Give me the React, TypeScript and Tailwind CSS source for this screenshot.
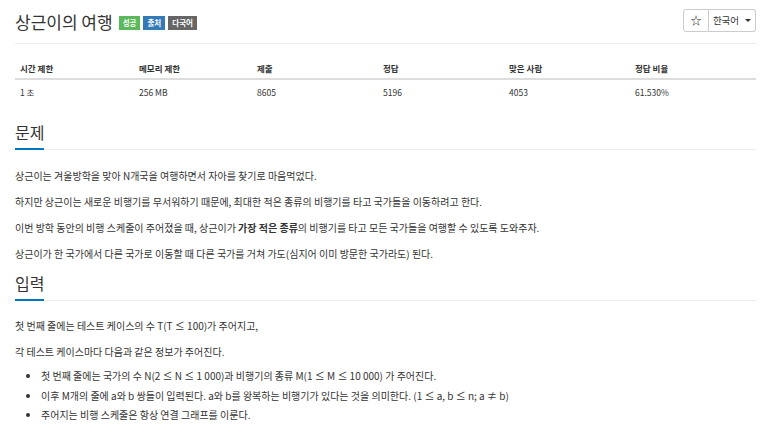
const stats = [
  { label: '시간 제한', value: '1 초', w: 'w-[119px]' },
  { label: '메모리 제한', value: '256 MB', w: 'w-[118px]' },
  { label: '제출', value: '8605', w: 'w-[126px]' },
  { label: '정답', value: '5196', w: 'w-[126px]' },
  { label: '맞은 사람', value: '4053', w: 'w-[126px]' },
  { label: '정답 비율', value: '61.530%', w: 'flex-1' },
];

const SectionTitle = ({ children }: { children: string }) => (
  <div className="border-b border-[#eeeeee] flex">
    <h2 className="text-[16px] leading-[22px] text-[#333] pb-[5px] border-b-2 border-[#0076c0] -mb-px">
      {children}
    </h2>
  </div>
);

export default function App() {
  return (
    <div
      className="bg-white min-h-[435px] pl-[15px] pr-[12px] text-[#333] overflow-hidden"
      style={{ fontFamily: '"Noto Sans CJK KR", "Open Sans", sans-serif' }}
    >
      {/* Header */}
      <div className="flex items-center justify-between h-[44px] border-b border-[#eeeeee]">
        <div className="flex items-center gap-[6px]">
          <h1 className="text-[17px] leading-none text-[#333]">상근이의 여행</h1>
          <div className="flex gap-[3px] mt-[3px]">
            <span className="bg-[#5cb85c] text-white text-[7.5px] font-bold px-[4px] h-[14px] leading-[14px]">성공</span>
            <span className="bg-[#337ab7] text-white text-[7.5px] font-bold px-[4px] h-[14px] leading-[14px]">출처</span>
            <span className="bg-[#666] text-white text-[7.5px] font-bold px-[4px] h-[14px] leading-[14px]">다국어</span>
          </div>
        </div>
        <div className="flex h-[23px] mb-[2px]">
          <button className="w-[26px] border border-[#ccc] rounded-l-[3px] flex items-center justify-center text-[11px] text-[#222]">
            ☆
          </button>
          <button className="w-[47px] border border-l-0 border-[#ccc] rounded-r-[3px] flex items-center justify-center gap-[6px] text-[9.5px] text-[#333]">
            한국어
            <span className="w-0 h-0 border-l-[3px] border-r-[3px] border-t-[3px] border-l-transparent border-r-transparent border-t-[#333]" />
          </button>
        </div>
      </div>

      {/* Stats table */}
      <div className="mt-[14px] text-[8.5px]">
        <div className="flex h-[22px] items-center border-b-2 border-[#dddddd] font-bold">
          {stats.map((s) => (
            <div key={s.label} className={`${s.w} px-[5px]`}>{s.label}</div>
          ))}
        </div>
        <div className="flex h-[24px] items-center">
          {stats.map((s) => (
            <div key={s.label} className={`${s.w} px-[5px]`}>{s.value}</div>
          ))}
        </div>
      </div>

      {/* 문제 */}
      <div className="mt-[17px]">
        <SectionTitle>문제</SectionTitle>
        <div className="text-[10px] leading-[26px] pt-[13px]">
          <p>상근이는 겨울방학을 맞아 N개국을 여행하면서 자아를 찾기로 마음먹었다.</p>
          <p>하지만 상근이는 새로운 비행기를 무서워하기 때문에, 최대한 적은 종류의 비행기를 타고 국가들을 이동하려고 한다.</p>
          <p>이번 방학 동안의 비행 스케줄이 주어졌을 때, 상근이가 <strong>가장 적은 종류</strong>의 비행기를 타고 모든 국가들을 여행할 수 있도록 도와주자.</p>
          <p>상근이가 한 국가에서 다른 국가로 이동할 때 다른 국가를 거쳐 가도(심지어 이미 방문한 국가라도) 된다.</p>
        </div>
      </div>

      {/* 입력 */}
      <div className="mt-[5px]">
        <SectionTitle>입력</SectionTitle>
        <div className="text-[10px] leading-[26px] pt-[12px]">
          <p>첫 번째 줄에는 테스트 케이스의 수 T(T ≤ 100)가 주어지고,</p>
          <p>각 테스트 케이스마다 다음과 같은 정보가 주어진다.</p>
          <ul className="list-disc pl-[26px] leading-[19.5px] mt-[1px]">
            <li>첫 번째 줄에는 국가의 수 N(2 ≤ N ≤ 1 000)과 비행기의 종류 M(1 ≤ M ≤ 10 000) 가 주어진다.</li>
            <li>이후 M개의 줄에 a와 b 쌍들이 입력된다. a와 b를 왕복하는 비행기가 있다는 것을 의미한다. (1 ≤ a, b ≤ n; a ≠ b)</li>
            <li>주어지는 비행 스케줄은 항상 연결 그래프를 이룬다.</li>
          </ul>
        </div>
      </div>
    </div>
  );
}
